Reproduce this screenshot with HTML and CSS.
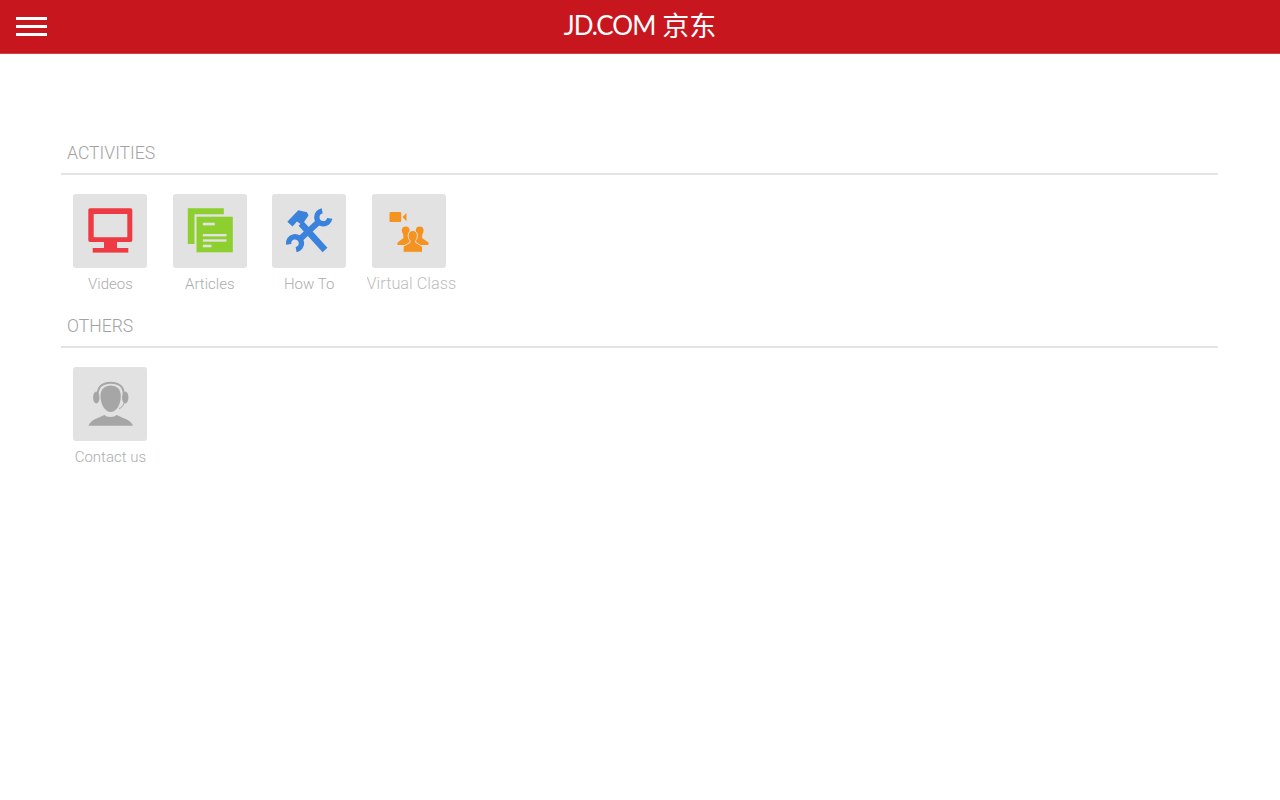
FILE: index.html
```html
<!DOCTYPE html>
<html lang="en">
<head>
  <meta charset="UTF-8" />
  <title>JD.COM</title>
  <link rel="stylesheet" href="styles.css">
</head>
<body>
  <header class="topbar">
    <div class="menu-btn">
      <span></span>
      <span></span>
      <span></span>
    </div>
    <div class="logo"><span class="logo-latin">JD.COM</span><span class="logo-cjk">京东</span></div>
  </header>

  <main class="contenido">
    <section class="seccion">
      <h2 class="seccion-titulo">ACTIVITIES</h2>
      <div class="items">
        <a class="item">
          <div class="tile">
            <svg viewBox="0 0 74 74" width="74" height="74">
              <path fill="#ee3a43" fill-rule="evenodd" d="M17 14.3H57.6Q59.3 14.3 59.3 16V46.3Q59.3 48 57.6 48H17Q15.3 48 15.3 46.3V16Q15.3 14.3 17 14.3ZM20.7 20V43.3H54.3V20Z" />
              <rect x="31" y="48" width="13" height="6.5" fill="#ee3a43" />
              <rect x="19.7" y="54" width="35.6" height="4.6" fill="#ee3a43" />
            </svg>
          </div>
          <span class="item-label">Videos</span>
        </a>
        <a class="item">
          <div class="tile">
            <svg viewBox="0 0 74 74" width="74" height="74">
              <path fill="#8ccf2e" d="M14.8 14.3H50.8V20.3H21.5V50H14.8Z" />
              <rect x="23.5" y="22.7" width="36.3" height="35.6" fill="#8ccf2e" />
              <rect x="29.8" y="28.7" width="12" height="2.7" fill="#e2e2e2" />
              <rect x="29.8" y="40" width="23.7" height="2.4" fill="#e2e2e2" />
              <rect x="29.8" y="45.3" width="23.7" height="2.4" fill="#e2e2e2" />
              <rect x="29.8" y="50.7" width="8.7" height="2.6" fill="#e2e2e2" />
            </svg>
          </div>
          <span class="item-label">Articles</span>
        </a>
        <a class="item">
          <div class="tile">
            <svg viewBox="0 0 74 74" width="74" height="74">
              <g fill="none" stroke="#3a82dc">
                <path stroke-width="6.5" d="M29 29.5L53 56" />
                <path stroke-width="6" d="M46.5 28L27 46" />
                <path stroke-width="5.4" d="M50.2 16.9A6.5 6.5 0 1 0 57.7 24.4" />
                <path stroke-width="5.4" d="M16.6 50.4A6.5 6.5 0 1 1 24.1 55.7" />
              </g>
              <path fill="#3a82dc" d="M15.3 27.7L26.3 16.3L35 18.3L36.5 21.5L30 31L25 27.5L20.5 32.5Z" />
            </svg>
          </div>
          <span class="item-label">How To</span>
        </a>
        <a class="item">
          <div class="tile">
            <svg viewBox="0 0 74 74" width="74" height="74">
              <rect x="17.5" y="18" width="11.7" height="10" rx="1" fill="#f59320" />
              <path fill="#f59320" d="M30.5 23L34.5 19V27.3Z" />
              <g fill="#f59320">
                <circle cx="33.7" cy="36.5" r="3.9" />
                <path d="M31 39H36.5L37 43L41 48V51H25.5V48.5L31.5 44Z" />
                <circle cx="47.7" cy="36.5" r="3.9" />
                <path d="M45 39H50.5L50 44L56.5 48.5V51H41V48L45 43Z" />
              </g>
              <g fill="#f59320" stroke="#e2e2e2" stroke-width="1">
                <path d="M36.2 41.5C36.2 38.5 38.1 36.5 40.8 36.5C43.5 36.5 45.4 38.5 45.4 41.5C45.4 44 44.5 45.5 43.7 46.5V48.5L50.5 52.5V58.3H31.1V52.5L37.9 48.5V46.5C37 45.5 36.2 44 36.2 41.5Z" />
              </g>
            </svg>
          </div>
          <span class="item-label item-label-ancho">Virtual Class</span>
        </a>
      </div>
    </section>

    <section class="seccion">
      <h2 class="seccion-titulo">OTHERS</h2>
      <div class="items">
        <a class="item">
          <div class="tile">
            <svg viewBox="0 0 74 74" width="74" height="74">
              <g fill="#a6a6a6">
                <path d="M27.5 29C27.5 22 32 18.5 37.7 18.5C43.5 18.5 47.8 22 47.8 29C47.8 38 43 45 37.7 45C32.4 45 27.5 38 27.5 29Z" />
                <path d="M15.5 58.7C17.5 53 25 51 31.5 48C33.5 50.5 41.5 50.5 43.5 48C50 51 58 53 60 58.7Z" />
                <ellipse cx="23.3" cy="30.5" rx="3.2" ry="6" />
                <ellipse cx="52.2" cy="30.5" rx="3.2" ry="6" />
              </g>
              <path fill="none" stroke="#a6a6a6" stroke-width="2" d="M24.8 27C24.8 19.5 30 15.7 37.7 15.7C45.5 15.7 50.7 19.5 50.7 27" />
              <path fill="none" stroke="#a6a6a6" stroke-width="1" d="M51 36C50 39.5 48 41 46 41.5" />
            </svg>
          </div>
          <span class="item-label">Contact us</span>
        </a>
      </div>
    </section>
  </main>
</body>
</html>
```

FILE: styles.css
```css
body {
  margin: 0;
  font-family: 'Roboto', 'Liberation Sans', sans-serif;
  background-color: #ffffff;
}

.topbar {
  display: grid;
  grid-template-columns: 1fr auto 1fr;
  align-items: center;
  height: 54px;
  box-sizing: border-box;
  background-color: #c8161f;
  border-bottom: 1px solid #d4444b;
}

.menu-btn {
  display: flex;
  flex-direction: column;
  gap: 5px;
  width: 31px;
  margin-left: 16px;
}

.menu-btn span {
  height: 3px;
  background-color: #fff;
}

.logo {
  display: flex;
  align-items: center;
  gap: 7px;
  padding-bottom: 4px;
  color: #fff;
  line-height: 48px;
}

.logo-latin {
  font-family: 'Lato', sans-serif;
  font-size: 26px;
  letter-spacing: -1px;
}

.logo-cjk {
  font-family: 'Noto Sans CJK SC', sans-serif;
  font-size: 27px;
  font-weight: 400;
}

.contenido {
  margin: 0 62px 0 61px;
  padding-top: 86px;
}

.seccion {
  margin-bottom: 23px;
}

.seccion-titulo {
  margin: 0;
  padding: 1px 0 8px 6px;
  font-size: 17.6px;
  font-weight: 300;
  line-height: 24px;
  color: #a2a2a2;
  border-bottom: 2px solid #e4e4e4;
}

.items {
  display: flex;
  gap: 25.4px;
  padding: 19px 0 0 12.4px;
}

.item {
  display: flex;
  flex-direction: column;
  align-items: center;
  width: 74px;
  height: 96px;
}

.tile {
  width: 74px;
  height: 74px;
  border-radius: 3px;
  background-color: #e2e2e2;
}

.tile svg {
  display: block;
}

.item-label {
  padding-top: 6px;
  font-size: 15px;
  font-weight: 300;
  line-height: 20px;
  color: #adadad;
  white-space: nowrap;
}

.item-label-ancho {
  align-self: flex-start;
  height: 15px;
  margin-left: -5px;
  padding-top: 6px;
  overflow: hidden;
  font-size: 16.3px;
  color: #bdbdbd;
}
```
